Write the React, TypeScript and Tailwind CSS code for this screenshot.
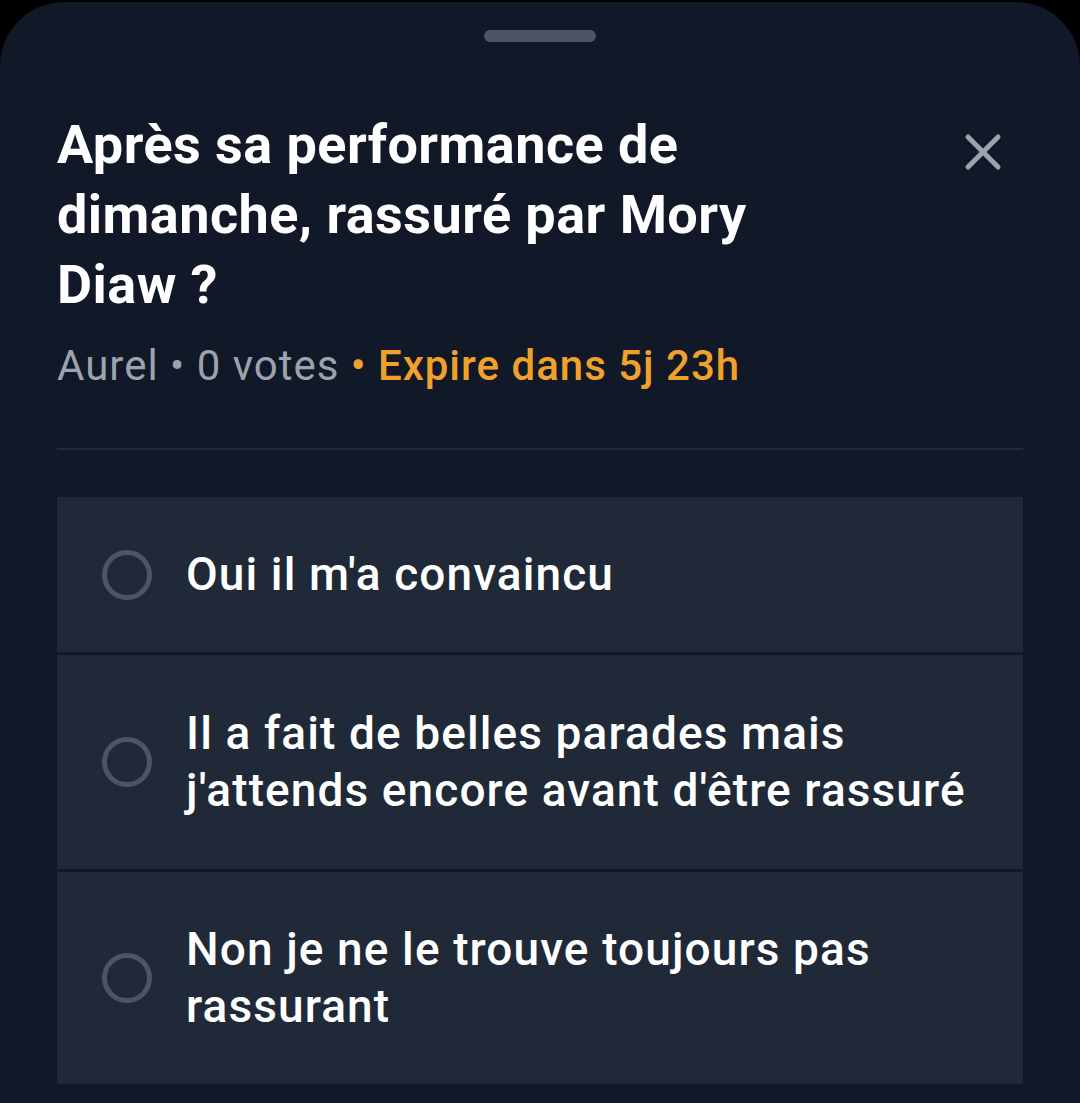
import React from 'react';
import { X } from 'lucide-react';

const options = [
  'Oui il m\'a convaincu',
  'Il a fait de belles parades mais j\'attends encore avant d\'être rassuré',
  'Non je ne le trouve toujours pas rassurant',
];

export default function App() {
  return (
    <div className="min-h-[1103px] bg-black pt-[2px] font-['Roboto',sans-serif]">
      <div className="h-[1101px] rounded-t-[64px] bg-[#111827] px-[57px]">
        {/* Drag handle */}
        <div className="mx-auto pt-[28px]">
          <div className="mx-auto h-[12px] w-[112px] rounded-full bg-[#4b5563]" />
        </div>

        {/* Header */}
        <header className="mt-[68px] flex items-start justify-between">
          <h1 className="w-[780px] text-[54px] font-bold leading-[70px] tracking-[0.45px] text-white">
            Après sa performance de dimanche, rassuré par Mory Diaw ?
          </h1>
          <button className="mr-[10px] mt-[12px] text-[#9ca3af]">
            <X size={60} strokeWidth={2} />
          </button>
        </header>

        <p className="mt-[18px] text-[42px] leading-[56px] tracking-[1px] text-[#9ca3af]">
          Aurel • 0 votes{' '}
          <span className="font-medium text-[#f0a12b]">• Expire dans 5j 23h</span>
        </p>

        <div className="mt-[54px] h-[2px] bg-[#1f2937]" />

        {/* Options */}
        <section className="mt-[47px] flex flex-col gap-[3px]">
          {options.map((opt, i) => (
            <div
              key={opt}
              className={`flex items-center gap-[34px] bg-[#1f2937] pl-[45px] pr-[45px] ${i === 1 ? 'py-[50px]' : 'py-[49px]'}`}
            >
              <span className="h-[50px] w-[50px] shrink-0 rounded-full border-[5px] border-[#4b5563]" />
              <span className="text-[46px] font-medium leading-[57px] tracking-[1.1px] text-white">{opt}</span>
            </div>
          ))}
        </section>
      </div>
    </div>
  );
}
